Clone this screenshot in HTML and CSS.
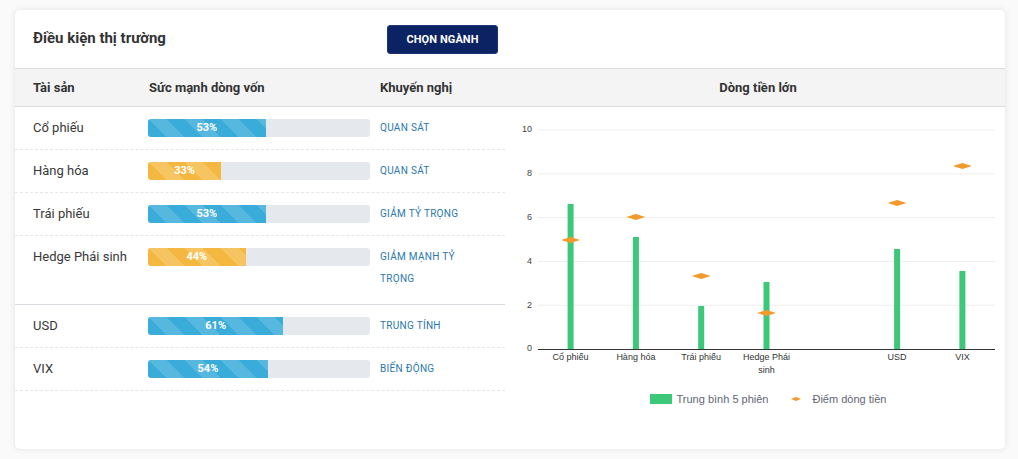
FILE: index.html
```html
<!DOCTYPE html>
<html lang="vi">
<head>
<meta charset="utf-8">
<title>Điều kiện thị trường</title>
<link rel="stylesheet" href="styles.css">
</head>
<body>
<div class="card">
  <div class="card-head">
    <div class="title">Điều kiện thị trường</div>
    <button class="btn">CHỌN NGÀNH</button>
  </div>
  <div class="card-body">
    <div class="table">
      <div class="thead">
        <div class="c1">Tài sản</div>
        <div class="c2">Sức mạnh dòng vốn</div>
        <div class="c3">Khuyến nghị</div>
      </div>
      <div class="row">
        <div class="c1">Cổ phiếu</div>
        <div class="c2"><div class="bar"><div class="fill blue" style="width:53%">53%</div></div></div>
        <div class="c3 rec">QUAN SÁT</div>
      </div>
      <div class="row">
        <div class="c1">Hàng hóa</div>
        <div class="c2"><div class="bar"><div class="fill orange" style="width:33%">33%</div></div></div>
        <div class="c3 rec">QUAN SÁT</div>
      </div>
      <div class="row">
        <div class="c1">Trái phiếu</div>
        <div class="c2"><div class="bar"><div class="fill blue" style="width:53%">53%</div></div></div>
        <div class="c3 rec">GIẢM TỶ TRỌNG</div>
      </div>
      <div class="row group-end">
        <div class="c1">Hedge Phái sinh</div>
        <div class="c2"><div class="bar"><div class="fill orange" style="width:44%">44%</div></div></div>
        <div class="c3 rec">GIẢM MẠNH TỶ TRỌNG</div>
      </div>
      <div class="row">
        <div class="c1">USD</div>
        <div class="c2"><div class="bar"><div class="fill blue" style="width:61%">61%</div></div></div>
        <div class="c3 rec">TRUNG TÍNH</div>
      </div>
      <div class="row">
        <div class="c1">VIX</div>
        <div class="c2"><div class="bar"><div class="fill blue" style="width:54%">54%</div></div></div>
        <div class="c3 rec">BIẾN ĐỘNG</div>
      </div>
    </div>
    <div class="chart">
      <div class="chart-head">Dòng tiền lớn</div>
      <svg class="plot" width="500" height="276" viewBox="0 0 500 276">
        <g class="grid">
          <line x1="33" y1="23" x2="490" y2="23"/>
          <line x1="33" y1="66.8" x2="490" y2="66.8"/>
          <line x1="33" y1="110.6" x2="490" y2="110.6"/>
          <line x1="33" y1="154.4" x2="490" y2="154.4"/>
          <line x1="33" y1="198.2" x2="490" y2="198.2"/>
        </g>
        <g class="ylab">
          <text x="27" y="23">10</text>
          <text x="27" y="66.8">8</text>
          <text x="27" y="110.6">6</text>
          <text x="27" y="154.4">4</text>
          <text x="27" y="198.2">2</text>
          <text x="27" y="242">0</text>
        </g>
        <g class="bars">
          <rect x="62.6" y="97" width="6" height="145"/>
          <rect x="127.9" y="130" width="6" height="112"/>
          <rect x="193.2" y="199" width="6" height="43"/>
          <rect x="258.5" y="175" width="6" height="67"/>
          <rect x="389.1" y="142" width="6" height="100"/>
          <rect x="454.4" y="164" width="6" height="78"/>
        </g>
        <line class="axis" x1="33" y1="242.5" x2="490" y2="242.5"/>
        <g class="marks">
          <polygon points="56.1,133 65.6,130 75.1,133 65.6,136"/>
          <polygon points="121.4,110 130.9,107 140.4,110 130.9,113"/>
          <polygon points="186.7,169 196.2,166 205.7,169 196.2,172"/>
          <polygon points="252,206 261.5,203 271,206 261.5,209"/>
          <polygon points="382.6,96 392.1,93 401.6,96 392.1,99"/>
          <polygon points="447.9,59 457.4,56 466.9,59 457.4,62"/>
        </g>
        <g class="xlab">
          <text x="65.6" y="251">Cổ phiếu</text>
          <text x="130.9" y="251">Hàng hóa</text>
          <text x="196.2" y="251">Trái phiếu</text>
          <text x="261.5" y="251">Hedge Phái</text>
          <text x="261.5" y="264">sinh</text>
          <text x="392.1" y="251">USD</text>
          <text x="457.4" y="251">VIX</text>
        </g>
      </svg>
      <div class="legend">
        <div class="lg-item"><span class="sw-bar"></span>Trung bình 5 phiên</div>
        <div class="lg-item"><svg class="sw-mark" width="10" height="6" viewBox="0 0 10 6"><polygon points="0,3 5,1 10,3 5,5"/></svg>Điểm dòng tiền</div>
      </div>
    </div>
  </div>
</div>
</body>
</html>
```

FILE: styles.css
```css
* { box-sizing: border-box; }
html, body { margin: 0; padding: 0; background: #fafafa; }
body {
  padding: 10px 13px 10px 15px;
  font-family: Roboto, "Liberation Sans", Arial, sans-serif;
  color: #333;
}
.card {
  width: 990px;
  height: 439px;
  background: #fff;
  border-radius: 5px;
  box-shadow: 0 0 6px rgba(0,0,0,0.10);
  overflow: hidden;
}
.card-head {
  height: 59px;
  border-bottom: 1px solid #dcdcdc;
  display: flex;
  align-items: flex-start;
  padding: 0 18px;
}
.title {
  width: 354px;
  font-size: 15px;
  font-weight: 700;
  line-height: 20px;
  padding-top: 18px;
  color: #333;
}
.btn {
  margin-top: 15px;
  width: 111px;
  height: 29px;
  background: #0c2363;
  border: 1px solid #1e3678;
  border-radius: 3px;
  color: #fff;
  font-family: Roboto, "Liberation Sans", Arial, sans-serif;
  font-weight: 700;
  font-size: 11px;
  padding: 0;
  letter-spacing: 0.1px;
}
.card-body { display: flex; }
.table { width: 490px; }
.thead, .chart-head {
  height: 38px;
  background: #f4f4f4;
  border-bottom: 1px solid #dcdcdc;
  font-weight: 700;
  font-size: 13px;
  line-height: 37px;
  color: #333;
}
.thead { display: flex; padding-left: 18px; }
.c1 { width: 116px; flex: none; }
.c2 { width: 231px; flex: none; padding-right: 10px; }
.c3 { flex: 1; }
.row {
  display: flex;
  padding: 10px 0 10px 18px;
  border-bottom: 1px dashed #e6e6e6;
  font-size: 13px;
  line-height: 22px;
  color: #383838;
}
.row .c1 { width: 115px; }
.row .c2 { width: 232px; }
.row.group-end {
  padding-bottom: 14px;
  border-bottom: 1px solid #d9dce1;
}
.bar {
  margin-top: 2px;
  width: 222px;
  height: 18px;
  background: #e5e8ec;
  border-radius: 3px;
  overflow: hidden;
}
.fill {
  height: 18px;
  color: #fff;
  font-size: 11px;
  font-weight: 700;
  line-height: 18px;
  text-align: center;
  background-size: 36px 36px;
}
.fill.blue {
  background-color: #3aacd9;
  background-image: linear-gradient(45deg, rgba(255,255,255,.15) 25%, transparent 25%, transparent 50%, rgba(255,255,255,.15) 50%, rgba(255,255,255,.15) 75%, transparent 75%, transparent);
}
.fill.orange {
  background-color: #f4b840;
  background-image: linear-gradient(45deg, rgba(255,255,255,.18) 25%, transparent 25%, transparent 50%, rgba(255,255,255,.18) 50%, rgba(255,255,255,.18) 75%, transparent 75%, transparent);
}
.rec {
  font-size: 10px;
  color: #2a78ad;
  letter-spacing: 0.3px;
  max-width: 86px;
  line-height: 22px;
}
.chart { width: 500px; }
.chart-head { text-align: center; padding-left: 6px; }
.plot { display: block; font-family: "Liberation Sans", Arial, sans-serif; }
.grid line { stroke: #eeeeee; stroke-width: 1; }
.axis { stroke: #333; stroke-width: 1; }
.ylab text { font-size: 9px; fill: #444; text-anchor: end; dominant-baseline: middle; }
.xlab text { font-size: 9px; fill: #333; text-anchor: middle; dominant-baseline: middle; }
.bars rect { fill: #3cc878; }
.marks polygon { fill: #f39a2c; }
.legend {
  display: flex;
  justify-content: center;
  padding-left: 26px;
  margin-top: 9px;
  font-family: "Liberation Sans", Arial, sans-serif;
  font-size: 11px;
  line-height: 14px;
  color: #5f6673;
  gap: 23px;
}
.lg-item { display: flex; align-items: center; }
.sw-bar { width: 22px; height: 10px; background: #3cc878; margin-right: 5px; }
.sw-mark { margin-right: 11px; }
.sw-mark polygon { fill: #f39a2c; }
```
